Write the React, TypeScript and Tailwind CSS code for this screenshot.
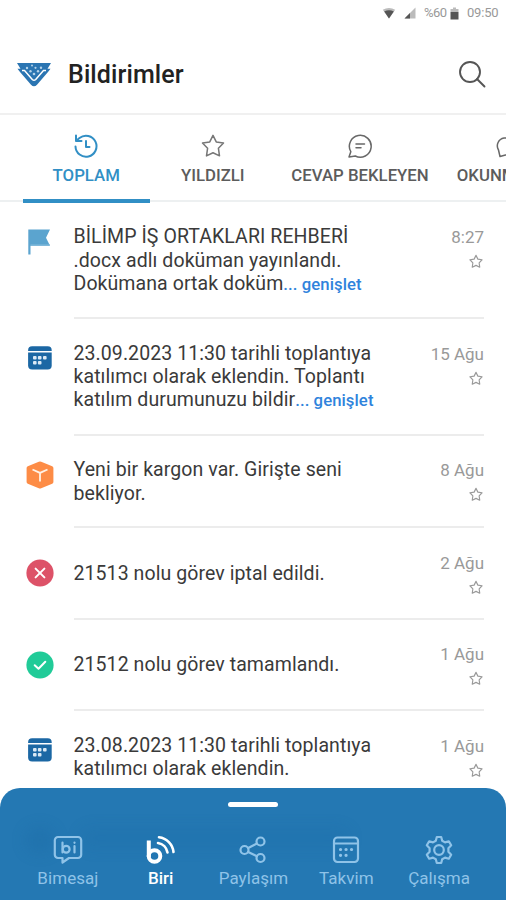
import type { ReactNode } from "react";

type IconName = "flag" | "calendar" | "cargo" | "cancel" | "done";

interface Notification {
  id: number;
  icon: IconName;
  lines: string[];
  more?: boolean;
  date: string;
}

const notifications: Notification[] = [
  {
    id: 1,
    icon: "flag",
    lines: ["BİLİMP İŞ ORTAKLARI REHBERİ", ".docx adlı doküman yayınlandı.", "Dokümana ortak doküm"],
    more: true,
    date: "8:27",
  },
  {
    id: 2,
    icon: "calendar",
    lines: ["23.09.2023 11:30 tarihli toplantıya", "katılımcı olarak eklendin. Toplantı", "katılım durumunuzu bildir"],
    more: true,
    date: "15 Ağu",
  },
  { id: 3, icon: "cargo", lines: ["Yeni bir kargon var. Girişte seni", "bekliyor."], date: "8 Ağu" },
  { id: 4, icon: "cancel", lines: ["21513 nolu görev iptal edildi."], date: "2 Ağu" },
  { id: 5, icon: "done", lines: ["21512 nolu görev tamamlandı."], date: "1 Ağu" },
  { id: 6, icon: "calendar", lines: ["23.08.2023 11:30 tarihli toplantıya", "katılımcı olarak eklendin."], date: "1 Ağu" },
];

function Star({ className, stroke }: { className: string; stroke: number }) {
  return (
    <svg viewBox="0 0 24 24" fill="none" stroke="currentColor" strokeWidth={stroke} strokeLinejoin="round" className={className}>
      <path d="M12 2.200l3 6 6.700 1-4.700 4.900 1 7L12 18.200l-6 2.900 1-7L2.300 9.200l6.700-1z" />
    </svg>
  );
}

const rowIcons: Record<IconName, ReactNode> = {
  flag: (
    <svg viewBox="0 0 28 28" className="h-7 w-7">
      <path d="M2.300 1.500H24L20 9.700l4 8H4.500V26.500H2.300z" fill="#5ba4cf" />
      <path d="M4.500 16.900H24" stroke="#7db8da" strokeWidth="1" />
    </svg>
  ),
  calendar: (
    <svg viewBox="0 0 28 28" className="h-7 w-7">
      <path d="M2.100 7V6.300a4 4 0 0 1 4-4h15.600a4 4 0 0 1 4 4V7z" fill="#1b67a4" />
      <path d="M2.100 8.600h23.600v13a4 4 0 0 1-4 4H6.100a4 4 0 0 1-4-4z" fill="#1b67a4" />
      <g fill="#dbe9f5">
        <rect x="7" y="12" width="3.600" height="3.600" rx="1" />
        <rect x="11.900" y="12" width="3.600" height="3.600" rx="1" />
        <rect x="17" y="12" width="3.600" height="3.600" rx="1" />
        <rect x="7" y="17" width="3.600" height="3.600" rx="1" />
        <rect x="11.900" y="17" width="3.600" height="3.600" rx="1" />
      </g>
    </svg>
  ),
  cargo: (
    <svg viewBox="0 0 28 28" className="h-7 w-7">
      <path d="M12.800.8a3 3 0 0 1 2.400 0l11 4.400a1.800 1.800 0 0 1 1.200 1.700v14.200a1.800 1.800 0 0 1-1.200 1.700l-11 4.400a3 3 0 0 1-2.400 0l-11-4.400A1.800 1.800 0 0 1 .6 21.100V6.900a1.800 1.800 0 0 1 1.200-1.700z" fill="#fd8c46" />
      <path d="M6.500 8.500l7.500 3.400 7.500-3.400M14 11.900v8.600" fill="none" stroke="#fff2e6" strokeWidth="1.800" />
    </svg>
  ),
  cancel: (
    <svg viewBox="0 0 28 28" className="h-7 w-7">
      <circle cx="14" cy="14" r="13.600" fill="#dd5268" />
      <path d="M9.600 9.600l8.800 8.800M18.400 9.600l-8.800 8.800" stroke="#fff" strokeWidth="2" strokeLinecap="round" />
    </svg>
  ),
  done: (
    <svg viewBox="0 0 28 28" className="h-7 w-7">
      <circle cx="14" cy="14" r="13.600" fill="#21cb98" />
      <path d="M8.700 14.300l3.800 3.500 6.800-7" fill="none" stroke="#fff" strokeWidth="2" strokeLinecap="round" strokeLinejoin="round" />
    </svg>
  ),
};

function StatusBar() {
  return (
    <div className="flex h-[26px] items-center justify-end pr-[7px] text-[13px] text-[#999]">
      <svg viewBox="0 0 14 12" className="mr-2 h-3 w-3.5">
        <path d="M.8 2.800Q7-1 13.200 2.800L7 11.500z" fill="#bbb" />
        <path d="M2.200 4.400Q7 2 11.800 4.400L7 11.500z" fill="#555" />
      </svg>
      <svg viewBox="0 0 12 12" className="mr-[8px] h-3 w-3">
        <path d="M11.500.5v11H.5z" fill="#bbb" />
        <path d="M6 6v5.500H.5z" fill="#555" />
      </svg>
      <span className="w-[23px] tracking-[-0.5px]">%60</span>
      <svg viewBox="0 0 9 13" className="mr-[8px] ml-[3px] h-[13px] w-[9px]">
        <path d="M3 .5h3v1.500h2.500V5h-8V2H3z" fill="#bbb" />
        <path d="M.5 5h8v7.500h-8z" fill="#555" />
      </svg>
      <span className="w-[32px] tracking-[-0.2px] whitespace-nowrap">09:50</span>
    </div>
  );
}

function Logo() {
  return (
    <svg viewBox="0 0 36 26" className="h-[26px] w-9">
      <path d="M1 1h34l-3.500 5.800H34.500l-2.500 3.200L21 22.700q-3 3.100-6 0L4 10 1.500 6.800H4.500z" fill="#2b75b2" />
      <path d="M6 8.500h2.500L16.300 17.500q1.700 1.700 3.400 0L27.500 8.500H30" fill="none" stroke="#fff" strokeWidth="1.500" />
      <g fill="#b5d3ea">
        <circle cx="11" cy="6" r="1.200" />
        <circle cx="16" cy="3.500" r="1" />
        <circle cx="19.500" cy="5.800" r="1.100" />
        <circle cx="25" cy="5.800" r="1.200" />
        <circle cx="14.500" cy="9.300" r="1.200" />
        <circle cx="18" cy="12" r="1.300" />
        <circle cx="22" cy="9.300" r="1.200" />
      </g>
    </svg>
  );
}

function Tabs() {
  return (
    <div className="flex h-[90px] w-full overflow-hidden border-t-2 border-[#f0f0f0] pl-[23px] text-[16.8px] font-medium whitespace-nowrap text-[#5c5c5c]">
      <button className="flex w-[126.5px] shrink-0 flex-col items-center border-b-4 border-[#318fc5] pt-[18px] text-[#318fc5]">
        <svg viewBox="0 0 26 26" fill="none" stroke="currentColor" strokeWidth="2" strokeLinecap="round" strokeLinejoin="round" className="h-[26px] w-[26px]">
          <path d="M2.500 13.500A10.500 10.500 0 1 0 6.500 5L3.500 7.500" />
          <path d="M3 2.500v5.500h5.500M13 8v6h3.500" />
        </svg>
        <span className="mt-[4px] leading-6">TOPLAM</span>
      </button>
      <button className="flex w-[126.5px] shrink-0 flex-col items-center pt-[18px]">
        <Star className="h-[26px] w-[26px] text-[#777]" stroke={1.4} />
        <span className="mt-[4px] leading-6">YILDIZLI</span>
      </button>
      <button className="flex w-[168px] shrink-0 flex-col items-center pt-[18px]">
        <svg viewBox="0 0 26 26" fill="none" stroke="#686868" strokeWidth="1.500" strokeLinecap="round" strokeLinejoin="round" className="h-[26px] w-[26px]">
          <path d="M3.800 18.700A10.900 10.900 0 1 1 8.300 23L2 24z" />
          <path d="M9 11h8.500M9 14.700h5" />
        </svg>
        <span className="mt-[4px] leading-6">CEVAP BEKLEYEN</span>
      </button>
      <button className="flex w-[128px] shrink-0 flex-col items-center pt-[18px]">
        <svg viewBox="0 0 26 26" fill="none" stroke="#686868" strokeWidth="1.500" strokeLinejoin="round" className="h-[26px] w-[26px]">
          <path d="M5 23.500L3.500 17A8 8 0 0 1 9 5h6a8 8 0 0 1 3 17h-7.500z" />
        </svg>
        <span className="mt-[4px] leading-6">OKUNMAYAN</span>
      </button>
    </div>
  );
}

function Row({ item, last }: { item: Notification; last: boolean }) {
  const single = item.lines.length === 1;
  return (
    <div className={single ? "flex h-[91.5px] items-center pl-[26px]" : "flex pl-[26px]"}>
      <div className={single ? "w-[47.5px] shrink-0 pb-px" : "w-[47.5px] shrink-0 pt-[25px]"}>{rowIcons[item.icon]}</div>
      <div
        className={
          last
            ? "mr-[22px] flex grow justify-between pt-[22.5px]"
            : "mr-[22px] flex h-full grow justify-between border-b-2 border-[#ececec] pt-[22.5px] pb-[21.2px]"
        }
      >
        <div className={single ? "flex items-center text-[19.5px]" : "pt-[0.3px] text-[19.5px]"}>
          {item.lines.map((line, i) => (
            <p key={line} className="leading-[23.2px] tracking-[0.08px] whitespace-nowrap text-[#3a3a3a]">
              {line}
              {item.more && i === item.lines.length - 1 && (
                <span className="text-[16.7px] font-medium text-[#2f83dc]">... genişlet</span>
              )}
            </p>
          ))}
        </div>
        <div className="flex flex-col items-end text-[17px] leading-[24px] whitespace-nowrap text-[#999]">
          <span>{item.date}</span>
          <Star className="mt-[5px] h-[15px] w-4 text-[#999]" stroke={1.8} />
        </div>
      </div>
    </div>
  );
}

const navItems: { label: string; active?: boolean; icon: ReactNode }[] = [
  {
    label: "Bimesaj",
    icon: (
      <>
        <path d="M5 2h20a3.200 3.200 0 0 1 3.200 3.200v14.600A3.200 3.200 0 0 1 25 23H16L9.500 27.500V23H5a3.200 3.200 0 0 1-3.200-3.200V5.200A3.200 3.200 0 0 1 5 2z" />
        <path d="M9.500 7.500v10M21.500 11v6.500M21.500 7.500v.3" />
        <circle cx="13.200" cy="14.200" r="3.400" />
      </>
    ),
  },
  {
    label: "Biri",
    active: true,
    icon: (
      <>
        <path d="M2.800 5.500V22" strokeWidth="4" strokeLinecap="butt" />
        <circle cx="8.500" cy="21" r="5.800" strokeWidth="4" />
        <path d="M12 8A11.500 11.500 0 0 1 21.500 17.500" strokeWidth="2.600" />
        <path d="M13 2.200A16.500 16.500 0 0 1 27.500 17" strokeWidth="2.600" />
      </>
    ),
  },
  {
    label: "Paylaşım",
    icon: (
      <>
        <circle cx="6.500" cy="15" r="4" />
        <circle cx="22.500" cy="6.500" r="4" />
        <circle cx="22.500" cy="23" r="4" />
        <path d="M10.200 13l8.700-4.400M10.200 17l8.700 4.200" />
      </>
    ),
  },
  {
    label: "Takvim",
    icon: (
      <>
        <rect x="3" y="2.500" width="24" height="24.500" rx="3.500" />
        <path d="M3 8.500h24" />
        <path d="M9.500 14.500h.1M15 14.500h.1M20.500 14.500h.1M9.500 20.300h.1M15 20.300h.1" strokeWidth="3.200" />
      </>
    ),
  },
  {
    label: "Çalışma",
    icon: (
      <>
        <path d="M12.800 2h4.400l1 3.800 2.800 1.600 3.800-1.100 2.400 4-2.800 2.900v3.600l2.800 2.900-2.400 4-3.800-1.100-2.800 1.600-1 3.800h-4.400l-1-3.800L9 22.600l-3.800 1.100-2.400-4 2.800-2.900v-3.600l-2.800-2.900 2.400-4L9 7.400l2.800-1.600z" />
        <circle cx="15" cy="15" r="4.800" />
      </>
    ),
  },
];

function BottomNav() {
  return (
    <nav className="absolute inset-x-0 bottom-0 h-[112.5px] overflow-hidden rounded-t-[20px] bg-[#2478b3]">
      {/* list content showing faintly through the panel */}
      <div className="absolute top-[40px] left-[26px] h-6 w-7 rounded-full bg-[#17649d] opacity-25 blur-[8px]" />
      <div className="absolute top-[40px] left-[80px] h-5 w-[270px] rounded-full bg-[#17649d] opacity-15 blur-[8px]" />
      <div className="mx-auto mt-[14px] h-[5px] w-[50px] rounded-full bg-white" />
      <div className="relative mt-[28px] grid grid-cols-5 pr-[20.5px] pl-[21.5px]">
        {navItems.map((item) => (
          <button
            key={item.label}
            className={
              item.active
                ? "flex flex-col items-center text-[17px] font-medium text-white"
                : "flex flex-col items-center text-[17px] text-[#8fc3e8]"
            }
          >
            <svg viewBox="0 0 30 30" fill="none" stroke="currentColor" strokeWidth="2.200" strokeLinecap="round" strokeLinejoin="round" className="h-[30px] w-[30px]">
              {item.icon}
            </svg>
            <span className="mt-[1.5px] leading-6 tracking-[0.05px]">{item.label}</span>
          </button>
        ))}
      </div>
    </nav>
  );
}

export default function App() {
  return (
    <div className="relative h-[900px] w-[506px] overflow-hidden bg-white font-[Roboto,sans-serif]">
      <StatusBar />
      <header className="flex h-[87px] items-center pt-[10px] pr-[20px] pl-[16px]">
        <Logo />
        <h1 className="ml-4 text-[25px] font-medium tracking-[0.1px] text-[#222]">Bildirimler</h1>
        <svg viewBox="0 0 28 28" fill="none" stroke="#555" strokeWidth="1.900" strokeLinecap="round" className="ml-auto h-7 w-7">
          <circle cx="12" cy="11" r="10" />
          <path d="M19 18l7.500 7.500" />
        </svg>
      </header>
      <div className="border-b-2 border-[#edf0f1]">
        <div className="-mb-[3px]">
          <Tabs />
        </div>
      </div>
      <main className="pt-[0.5px]">
        {notifications.map((item, i) => (
          <Row key={item.id} item={item} last={i === notifications.length - 1} />
        ))}
      </main>
      <BottomNav />
    </div>
  );
}
